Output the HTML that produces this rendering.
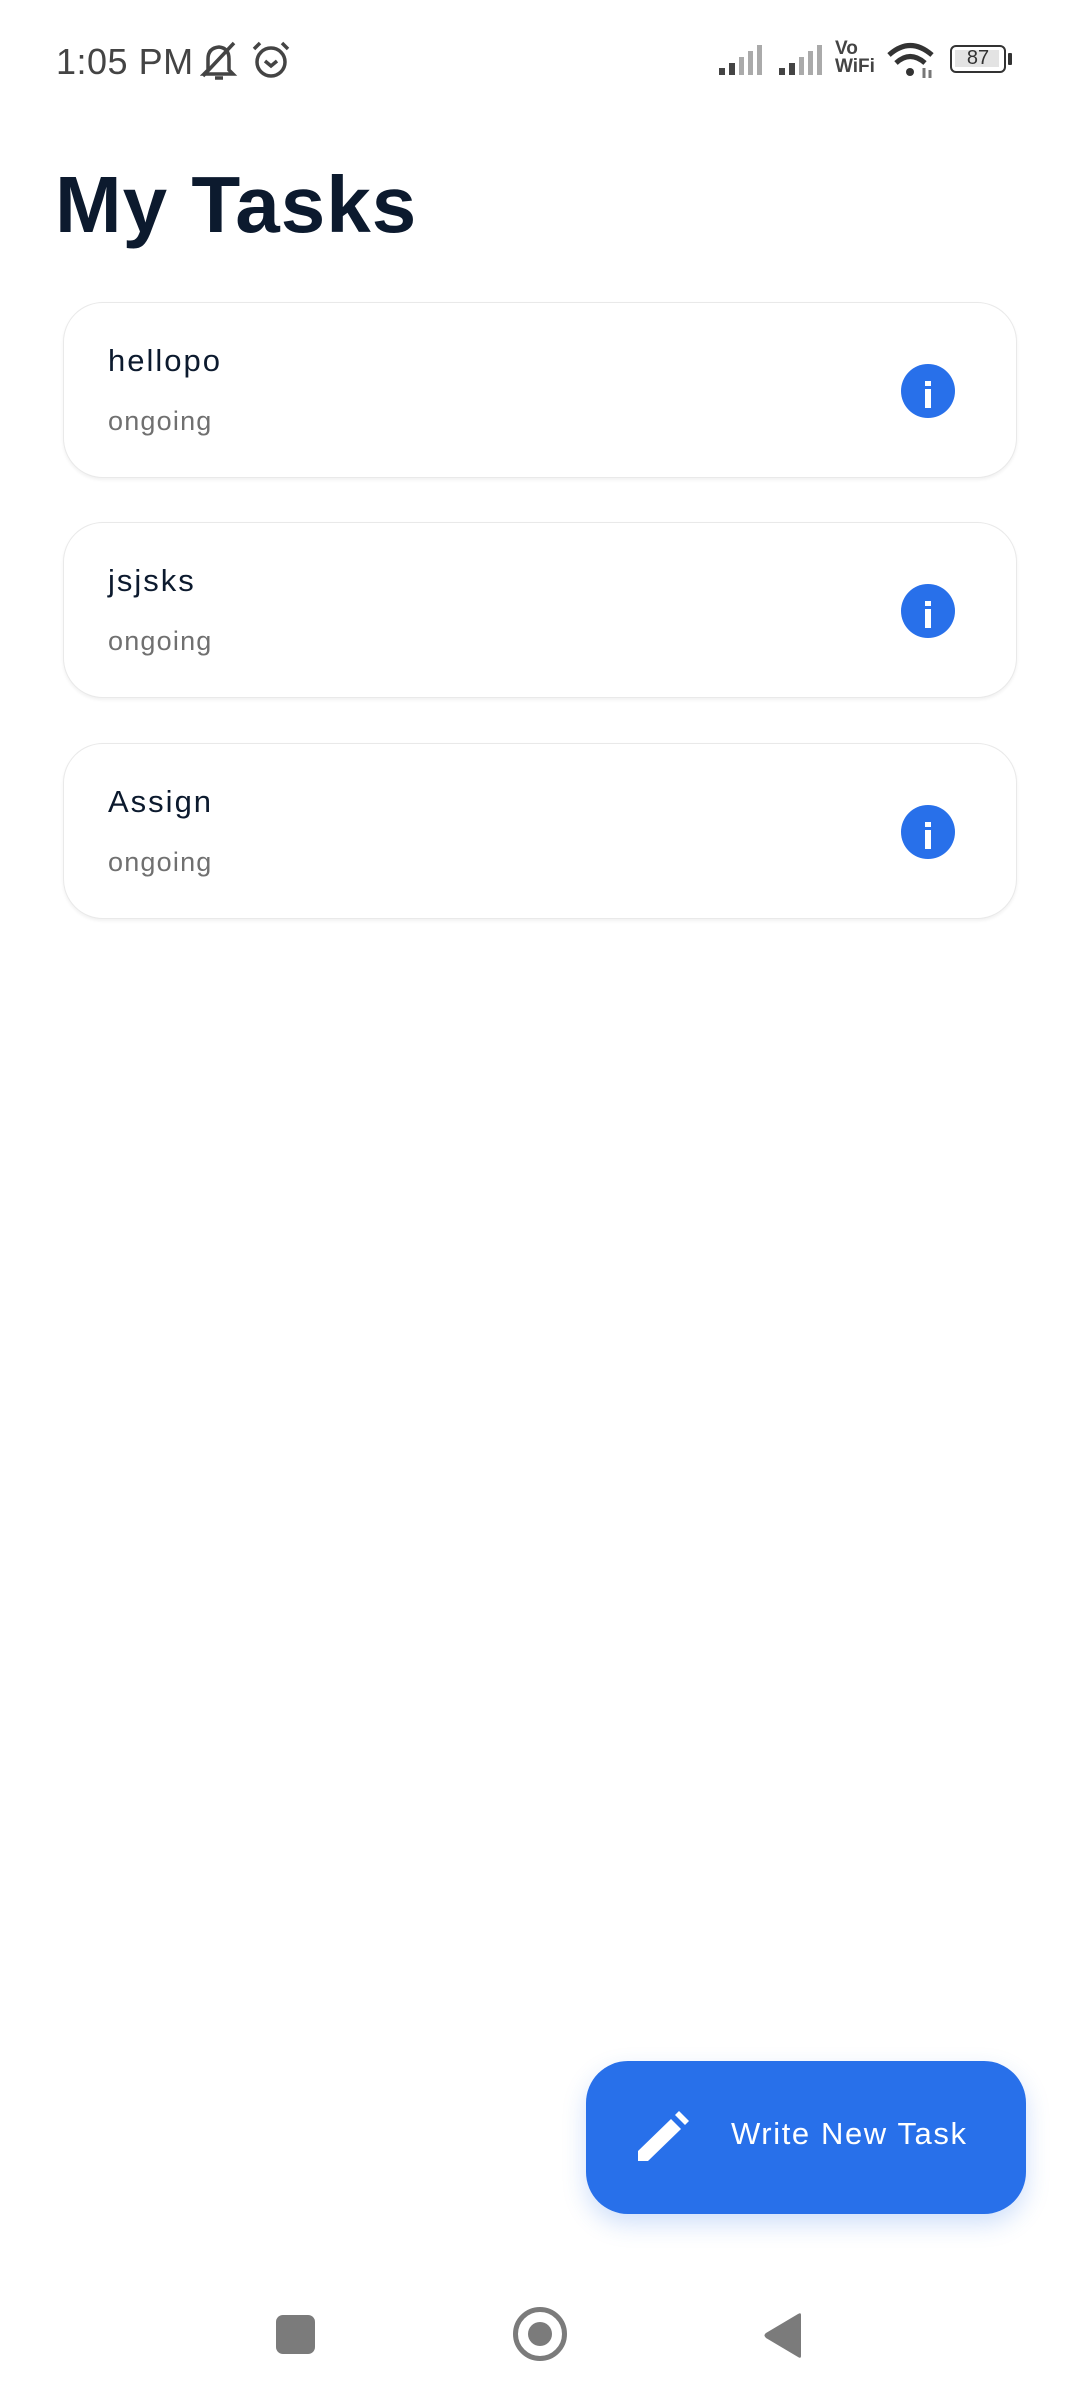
<!DOCTYPE html>
<html><head><meta charset="utf-8"><style>
html,body{margin:0;padding:0;background:#fff;}
body{width:1080px;height:2400px;position:relative;overflow:hidden;font-family:"Liberation Sans",sans-serif;}
.abs{position:absolute;}
.card{position:absolute;left:63px;width:954px;height:176px;border:1.5px solid #e9e9e9;border-radius:40px;box-sizing:border-box;background:#fff;box-shadow:0 2px 3px rgba(0,0,0,0.06);}
.t{position:absolute;left:44px;top:40px;font-size:31px;color:#0c1a2e;line-height:36px;letter-spacing:2px;}
.s{position:absolute;left:44px;top:102px;font-size:27px;color:#707070;line-height:32px;letter-spacing:1.2px;}
.info{position:absolute;left:837px;top:61px;width:54px;height:54px;border-radius:50%;background:#2870ea;}
.info:before{content:"";position:absolute;left:24px;top:17px;width:6px;height:5px;background:#fff;}
.info:after{content:"";position:absolute;left:24px;top:25px;width:6px;height:19px;background:#fff;}
</style></head><body>
<div class="abs" style="left:56px;top:44px;font-size:36px;color:#444;line-height:36px;letter-spacing:0.5px;">1:05 PM</div>
<svg class="abs" style="left:200px;top:40px" width="40" height="42" viewBox="0 0 40 42" fill="none" stroke="#444" stroke-width="3.5"><path d="M8 30 L8 19 Q8 8 19 7 Q29 8 29 19 L29 30 L33 34 L4 34 Z"/><path d="M15 38 L23 38"/><path d="M3 36 L34 3"/></svg>
<svg class="abs" style="left:249px;top:40px" width="44" height="40" viewBox="0 0 44 40" fill="none" stroke="#444" stroke-width="3.5"><circle cx="22" cy="22" r="14"/><path d="M16 21 L22 26 L28 21"/><path d="M5 9 L11 3 M39 9 L33 3"/></svg>
<svg class="abs" style="left:718px;top:44px" width="50" height="32" viewBox="0 0 50 32"><rect x="1" y="24" width="6" height="7" fill="#444"/><rect x="11" y="19" width="6" height="12" fill="#444"/><rect x="21" y="13" width="5" height="18" fill="#aaa"/><rect x="30" y="7" width="5" height="24" fill="#aaa"/><rect x="39" y="1" width="5" height="30" fill="#aaa"/></svg>
<svg class="abs" style="left:778px;top:44px" width="50" height="32" viewBox="0 0 50 32"><rect x="1" y="24" width="6" height="7" fill="#444"/><rect x="11" y="19" width="6" height="12" fill="#444"/><rect x="21" y="13" width="5" height="18" fill="#aaa"/><rect x="30" y="7" width="5" height="24" fill="#aaa"/><rect x="39" y="1" width="5" height="30" fill="#aaa"/></svg>
<div class="abs" style="left:835px;top:40px;font-size:19px;line-height:18px;color:#444;font-weight:bold;">Vo<br>WiFi</div>
<svg class="abs" style="left:886px;top:42px" width="52" height="38" viewBox="0 0 52 38" fill="none" stroke="#333" stroke-width="5"><path d="M3 13 Q24 -6 46 13"/><path d="M10 21 Q24 8 39 21"/><circle cx="24" cy="30" r="4" fill="#333" stroke="none"/><path d="M38 26 L38 36 M44 28 L44 36" stroke-width="3" stroke="#777"/></svg>
<div class="abs" style="left:950px;top:45px;width:56px;height:28px;border:2.5px solid #333;border-radius:6px;box-sizing:border-box;"><div style="position:absolute;left:3px;top:3px;width:44px;height:17px;background:#e3e3e3;"></div><div style="position:absolute;left:0;width:52px;top:0;text-align:center;font-size:20px;line-height:23px;color:#333;">87</div></div>
<div class="abs" style="left:1008px;top:53px;width:4px;height:12px;background:#333;border-radius:1px;"></div>
<div class="abs" style="left:55px;top:160px;font-size:80px;font-weight:bold;color:#0c1a2e;line-height:90px;letter-spacing:1px;">My Tasks</div>
<div class="card" style="top:302px"><div class="t">hellopo</div><div class="s">ongoing</div><div class="info"></div></div>
<div class="card" style="top:522px"><div class="t">jsjsks</div><div class="s">ongoing</div><div class="info"></div></div>
<div class="card" style="top:743px"><div class="t">Assign</div><div class="s">ongoing</div><div class="info"></div></div>
<div class="abs" style="left:586px;top:2061px;width:440px;height:153px;border-radius:42px;background:#2870ea;box-shadow:0 10px 24px rgba(40,112,234,0.22);">
<svg class="abs" style="left:50px;top:50px" width="54" height="54" viewBox="0 0 54 54" fill="#fff"><path d="M2 40 L35 8 L45 18 L12 50 L2 50 Z"/><path d="M39 4 L43 0 L53 10 L49 14 Z"/></svg>
<div class="abs" style="left:145px;top:55px;font-size:31px;color:#fff;line-height:36px;letter-spacing:1.6px;">Write New Task</div>
</div>
<div class="abs" style="left:276px;top:2315px;width:39px;height:39px;border-radius:7px;background:#7b7b7b;"></div>
<div class="abs" style="left:513px;top:2307px;width:54px;height:54px;border-radius:50%;border:5px solid #7b7b7b;box-sizing:border-box;"><div style="position:absolute;left:10px;top:10px;width:24px;height:24px;border-radius:50%;background:#7b7b7b;"></div></div>
<svg class="abs" style="left:763px;top:2311px" width="42" height="48" viewBox="0 0 42 48"><path d="M38 2 L38 45 Q38 48 35 46 L3 27 Q0 24 3 22 L35 3 Q38 1 38 4 Z" fill="#7b7b7b"/></svg>
</body></html>
